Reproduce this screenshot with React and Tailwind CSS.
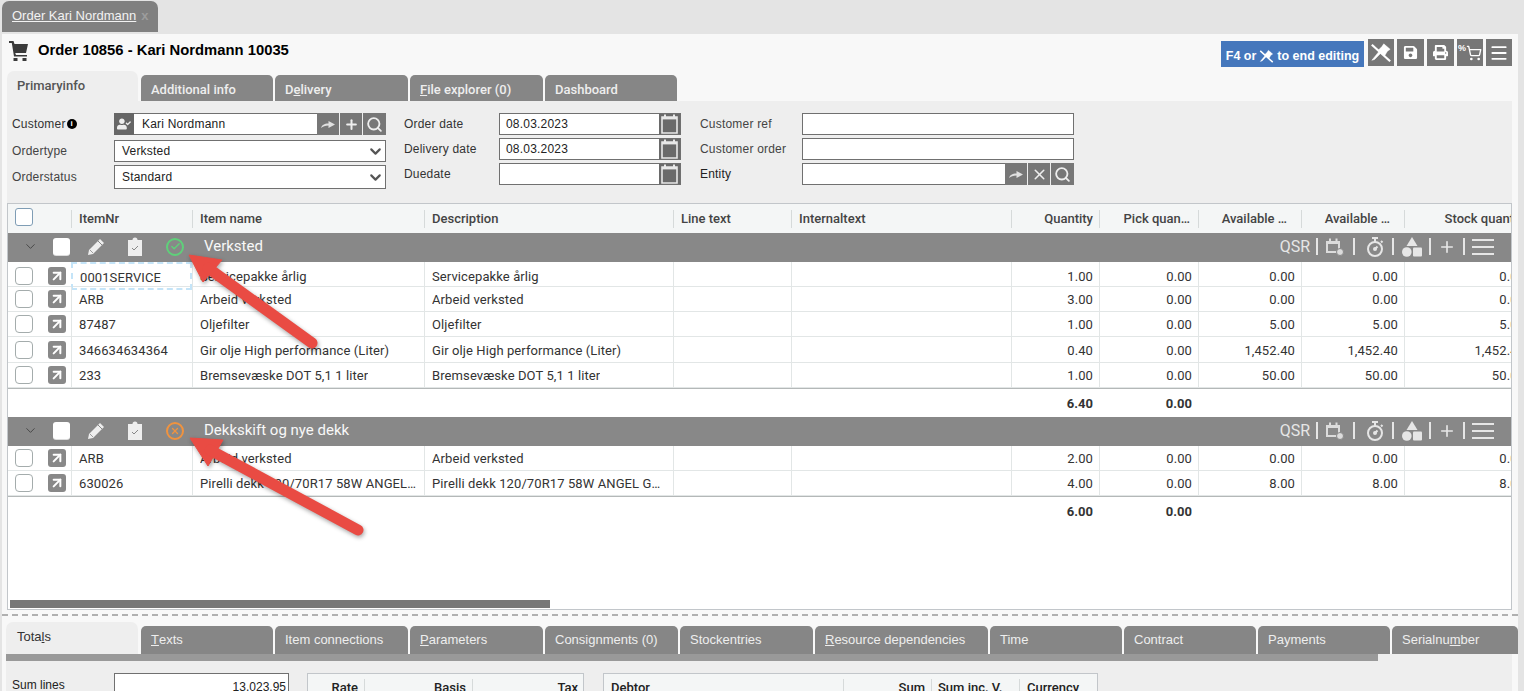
import React from "react";
import { Check, ChevronDown, Plus, Search, X, ArrowUpRight, Menu, ShoppingCart } from "lucide-react";
import { FaSave, FaPrint, FaUserCheck } from "react-icons/fa";

const tableCols =
  "grid grid-cols-[63px_121px_232px_249px_118px_220px_88px_99px_103px_103px_127px] w-[1523px]";

const topTabs = [
  { label: "Additional info", w: "w-[132px]" },
  { label: "Delivery", under: 1, w: "w-[133px]" },
  { label: "File explorer (0)", under: 0, w: "w-[133px]" },
  { label: "Dashboard", w: "w-[132px]" },
];

const bottomTabs = [
  { label: "Texts", under: 0, w: "w-[132px]" },
  { label: "Item connections", w: "w-[133px]" },
  { label: "Parameters", under: 0, w: "w-[133px]" },
  { label: "Consignments (0)", w: "w-[133px]" },
  { label: "Stockentries", w: "w-[133px]" },
  { label: "Resource dependencies", under: 0, w: "w-[173px]" },
  { label: "Time", w: "w-[132px]" },
  { label: "Contract", w: "w-[132px]" },
  { label: "Payments", w: "w-[132px]" },
  { label: "Serialnumber", under: 8, w: "w-[126px]" },
];

const groups = [
  {
    title: "Verksted",
    status: "ok",
    rows: [
      { nr: "0001SERVICE", name: "Servicepakke årlig", qty: "1.00", avail: "0.00", h: "h-[25px]", selected: true },
      { nr: "ARB", name: "Arbeid verksted", qty: "3.00", avail: "0.00", h: "h-[25px]" },
      { nr: "87487", name: "Oljefilter", qty: "1.00", avail: "5.00", h: "h-[25px]" },
      { nr: "346634634364", name: "Gir olje High performance (Liter)", qty: "0.40", avail: "1,452.40", h: "h-[26px]" },
      { nr: "233", name: "Bremsevæske DOT 5,1 1 liter", qty: "1.00", avail: "50.00", h: "h-[25px]" },
    ],
    total: "6.40",
  },
  {
    title: "Dekkskift og nye dekk",
    status: "bad",
    rows: [
      { nr: "ARB", name: "Arbeid verksted", qty: "2.00", avail: "0.00", h: "h-[25px]" },
      {
        nr: "630026",
        name: "Pirelli dekk 120/70R17 58W ANGEL GT 180/55",
        qty: "4.00",
        avail: "8.00",
        h: "h-[25px]",
      },
    ],
    total: "6.00",
  },
];

const Underlined = ({ label, under }) => {
  if (under === undefined) return label;
  return (
    <>
      {label.slice(0, under)}
      <span className="underline">{label[under]}</span>
      {label.slice(under + 1)}
    </>
  );
};

const CartIcon = () => (
  <svg width="19" height="20" viewBox="0 0 19 20" className="mb-[4px] fill-[#3a3a3a]">
    <path d="M0 0h4.5l1 3H19l-2 9H6.2L7 14h11v1.6H5L2.8 2H0z" />
    <rect x="4.5" y="17" width="4" height="3" />
    <rect x="13.5" y="17" width="4" height="3" />
  </svg>
);

const ForwardIcon = () => (
  <svg width="14" height="9" viewBox="0 0 14 9" className="fill-[#e0e0e0]">
    <path d="M0 8c1-3 3-4.5 7.5-4.5V1L14 4.5 7.5 8V5.6C4 5.6 2 6.5 0 8z" />
  </svg>
);

const CalendarIcon = () => (
  <div className="flex h-full w-[21px] shrink-0 items-center justify-center bg-[#6a6a6a]">
    <svg width="17" height="20" viewBox="0 0 17 20">
      <path d="M1 3h15v16H1z" fill="none" stroke="#e8e8e8" strokeWidth="1.6" />
      <path d="M1 3h15v2.4H1z" fill="#e8e8e8" />
      <rect x="3" y="0.5" width="2" height="3.5" fill="#e8e8e8" />
      <rect x="12" y="0.5" width="2" height="3.5" fill="#e8e8e8" />
    </svg>
  </div>
);

const PinOff = ({ size = 22 }) => (
  <svg width={size} height={size} viewBox="0 0 24 24" className="fill-white stroke-white">
    <path d="M15 2l7 6-3 2-3 5-7-6 4-4z" strokeWidth="0.5" />
    <path d="M10 10L2 20l3-1 7-7" strokeWidth="0.5" />
    <path d="M2 3l20 18" strokeWidth="2.4" fill="none" />
  </svg>
);

const PencilIcon = () => (
  <svg width="18" height="18" viewBox="0 0 18 18" className="ml-[17px]">
    <path d="M13 1l4 4L6 16l-5 1 1-5z" fill="#eeeeee" />
    <path d="M11 3l4 4" stroke="#888" strokeWidth="1" />
    <path d="M3 12l3 3" stroke="#888" strokeWidth="0.8" />
  </svg>
);

const ShapesIcon = () => (
  <svg width="20" height="20" viewBox="0 0 20 20" className="fill-[#e6e6e6]">
    <path d="M10 0l5.5 9h-11z" />
    <circle cx="4.8" cy="15" r="4.8" />
    <rect x="11" y="10.5" width="9" height="9" rx="1" />
  </svg>
);

const TimerIcon = () => (
  <svg width="18" height="20" viewBox="0 0 18 20" fill="none" stroke="#e6e6e6" strokeWidth="2">
    <circle cx="9" cy="12" r="7" />
    <path d="M6 1h6M9 1v4M15 4l1.5 1.5" />
    <path d="M9 12l2.5-2.5" />
    <circle cx="9" cy="12" r="1" />
  </svg>
);

const DateClockIcon = () => (
  <svg width="18" height="18" viewBox="0 0 18 18">
    <path d="M0 3h14v12H0z" fill="#dcdcdc" />
    <path d="M2 6h10v7H2z" fill="#8a8a8a" />
    <path d="M3 0.5h2v3H3zM9.5 0.5h2v3h-2z" fill="#dcdcdc" />
    <circle cx="14" cy="14" r="3.5" fill="#dcdcdc" stroke="#888" />
  </svg>
);

const ClipboardIcon = () => (
  <svg width="16" height="19" viewBox="0 0 16 19">
    <path d="M1 3h4.5a2.5 2.5 0 015 0H15v16H1z" fill="#eeeeee" />
    <path d="M5 11l2 2 4-4" fill="none" stroke="#888" strokeWidth="1" />
  </svg>
);

const LookupBtns = ({ middle }) => (
  <div className="flex h-full w-[69px] shrink-0 items-center bg-[#777]">
    <div className="flex h-full w-[22px] items-center justify-center">
      <ForwardIcon />
    </div>
    <div className="flex h-full w-[24px] items-center justify-center border-x border-[#eee]">
      {middle === "x" ? (
        <X size={17} strokeWidth={2.2} className="text-[#eee]" />
      ) : (
        <Plus size={15} strokeWidth={3.2} className="text-[#eee]" />
      )}
    </div>
    <div className="flex h-full flex-1 items-center justify-center">
      <Search size={17} strokeWidth={2.6} className="text-[#eee]" />
    </div>
  </div>
);

const Field = ({ label, labelW, h = "h-[22px]", mt, value, children, labelClass = "text-[#444]" }) => (
  <div className={`flex items-center ${mt || ""}`}>
    <div className={`${labelW} shrink-0 text-xs tracking-[0.2px] ${labelClass}`}>{label}</div>
    <div className={`flex ${h} flex-1 items-center border border-[#707070] bg-white pl-[7px] text-xs text-[#222]`}>
      {value}
      {children}
    </div>
  </div>
);

const SelectField = ({ label, value, h, mt }) => (
  <Field label={label} labelW="w-[102px]" h={h} mt={mt}>
    <span className="flex-1 tracking-[0.2px]">{value}</span>
    <ChevronDown size={17} strokeWidth={3} className="mr-[1px] text-[#555]" />
  </Field>
);

const DateField = ({ label, value, mt }) => (
  <div className={`flex h-[22px] items-center ${mt || ""}`}>
    <div className="w-[95px] shrink-0 text-xs tracking-[0.2px] text-[#333]">{label}</div>
    <div className="flex h-full flex-1 items-center border border-[#707070] bg-white pl-[6px] text-xs tracking-[0.2px] text-[#222]">
      <span className="flex-1">{value}</span>
      <CalendarIcon />
    </div>
  </div>
);

const ToolBtn = ({ children, w = "w-[27px]" }) => (
  <div className={`flex h-[27px] ${w} items-center justify-center bg-[#777] text-white`}>{children}</div>
);

const GroupRow = ({ title, status }) => (
  <div className="flex h-[29px] shrink-0 items-center bg-[#888] pb-[2px]">
    <ChevronDown size={15} strokeWidth={1.5} className="ml-[15px] text-[#444]" />
    <div className="ml-[15px] h-[17px] w-[17px] rounded-[3px] bg-white shadow-[0_1px_0_#ddd]" />
    <PencilIcon />
    <div className="ml-[22px] flex">
      <ClipboardIcon />
    </div>
    {status === "ok" ? (
      <div className="ml-[23px] flex h-[18px] w-[18px] items-center justify-center rounded-full border-2 border-[#5fd07a]">
        <Check size={11} strokeWidth={3} className="text-[#5fd07a]" />
      </div>
    ) : (
      <div className="ml-[23px] flex h-[18px] w-[18px] items-center justify-center rounded-full border-2 border-[#f0933f]">
        <X size={10} strokeWidth={3} className="text-[#f0933f]" />
      </div>
    )}
    <span className="ml-[20px] font-['Roboto',sans-serif] text-[15px] text-[#f8f8f8]">{title}</span>
    <div className="ml-auto flex items-center pr-[17px] text-[#e6e6e6]">
      <span className="font-['Roboto',sans-serif] text-base">QSR</span>
      <div className="ml-[6px] mr-[8px] h-[17px] w-[2px] bg-[#e6e6e6]" />
      <DateClockIcon />
      <div className="ml-[9px] mr-[11px] h-[17px] w-[2px] bg-[#e6e6e6]" />
      <TimerIcon />
      <div className="ml-[8px] mr-[8px] h-[17px] w-[2px] bg-[#e6e6e6]" />
      <ShapesIcon />
      <div className="mx-[7px] h-[17px] w-[2px] bg-[#e6e6e6]" />
      <Plus size={18} strokeWidth={2.2} />
      <div className="mx-[7px] h-[17px] w-[2px] bg-[#e6e6e6]" />
      <div className="flex h-[16px] w-[22px] flex-col justify-between">
        <div className="h-[2px] bg-[#e6e6e6]" />
        <div className="h-[2px] bg-[#e6e6e6]" />
        <div className="h-[2px] bg-[#e6e6e6]" />
      </div>
    </div>
  </div>
);

const ItemRow = ({ row }) => {
  const cell = "flex items-center border-l border-[#e2e6e6] pl-[7px] pt-[2px] whitespace-nowrap overflow-hidden";
  const num = "flex items-center justify-end border-l border-[#e2e6e6] pr-[6px] pt-[2px] whitespace-nowrap overflow-hidden";
  return (
    <div className={`${tableCols} ${row.h} shrink-0 border-b border-[#e2e6e6] font-['Roboto',sans-serif] text-[13px] tracking-[0.1px] text-[#333]`}>
      <div className="flex items-center">
        <div className="ml-[7px] h-[18px] w-[18px] rounded-[4px] border border-[#a4acac] bg-white" />
        <div className="ml-[15px] flex h-[18px] w-[18px] items-center justify-center rounded-[3px] bg-[#888]">
          <ArrowUpRight size={16} strokeWidth={3} className="text-white" />
        </div>
      </div>
      {row.selected ? (
        <div className="flex items-center border-2 border-dashed border-[#c4e4f8] pl-[7px] pt-[4px]">{row.nr}</div>
      ) : (
        <div className={`${cell} pr-[7px]`}>{row.nr}</div>
      )}
      <div className={`${cell} pr-[7px]`}>
        <span className="truncate">{row.name}</span>
      </div>
      <div className={`${cell} pr-[9px]`}>
        <span className="truncate">{row.name}</span>
      </div>
      <div className={cell} />
      <div className={cell} />
      <div className={num}>{row.qty}</div>
      <div className={num}>0.00</div>
      <div className={num}>{row.avail}</div>
      <div className={num}>{row.avail}</div>
      <div className={num}>{row.avail}</div>
    </div>
  );
};

const TotalRow = ({ total }) => (
  <div className={`${tableCols} h-[28px] shrink-0 items-center pt-[2px] font-['Roboto',sans-serif] text-[13px] font-bold text-[#333]`}>
    <div className="col-start-7 pr-[6px] text-right">{total}</div>
    <div className="pr-[6px] text-right">0.00</div>
  </div>
);

const HeadCell = ({ children, align = "" }) => (
  <div className={`flex h-[18px] items-center overflow-hidden whitespace-nowrap border-l border-[#d6dada] pl-[7px] ${align}`}>
    {children}
  </div>
);

const PanelHead = ({ children, w, right }) => (
  <div className={`flex h-[18px] ${w} shrink-0 items-center border-r border-[#d6dada] pr-[6px] ${right ? "justify-end" : ""}`}>
    {children}
  </div>
);

const App = () => {
  return (
    <div className="relative h-[691px] w-[1524px] overflow-hidden bg-[#e4e4e4] font-['Liberation_Sans',Arial,sans-serif]">
      {/* page tab */}
      <div className="flex h-[34px] items-start pl-[2px] pt-[1px]">
        <div className="flex h-[31px] w-[156px] items-center rounded-t-[7px] bg-[#808080] pb-[2px] pl-[10px] text-[13px] text-[#f2f2f2]">
          <span className="underline">Order Kari Nordmann</span>
          <span className="ml-[5px] font-bold text-[#9c9c9c]">x</span>
        </div>
      </div>

      <div className="ml-[2px] flex h-[657px] w-[1516px] flex-col bg-[#f8f8f8]">
        {/* title + buttons */}
        <div className="flex h-[37px] shrink-0 items-center pl-[7px] pr-[6px]">
          <CartIcon />
          <span className="mb-[4px] ml-[10px] text-[14.8px] font-bold text-black">Order 10856 - Kari Nordmann 10035</span>
          <div className="ml-auto flex items-center gap-[3px]">
            <div className="mr-[1px] mt-[2px] flex h-[26px] w-[143px] items-center justify-center gap-[3px] bg-[#4577bc] pt-[6px] text-[12.5px] font-bold text-white">
              F4 or <PinOff size={15} /> to end editing
            </div>
            <ToolBtn w="w-[26px]">
              <PinOff />
            </ToolBtn>
            <ToolBtn>
              <FaSave size={15} />
            </ToolBtn>
            <ToolBtn>
              <FaPrint size={15} />
            </ToolBtn>
            <ToolBtn w="w-[26px]">
              <span className="mb-[8px] text-[9px] font-bold">%</span>
              <ShoppingCart size={16} strokeWidth={2} />
            </ToolBtn>
            <ToolBtn w="w-[26px]">
              <Menu size={20} strokeWidth={2.2} />
            </ToolBtn>
          </div>
        </div>

        {/* top tabs */}
        <div className="flex h-[30px] shrink-0 items-end pl-[5px] font-['Roboto',sans-serif] text-[13px] font-medium">
          <div className="mr-[3px] flex h-[30px] w-[131px] rounded-t-[7px] bg-[#eeeeee] pl-[10px] pt-[5px] text-[#555]">
            Primaryinfo
          </div>
          {topTabs.map((tab) => (
            <div
              key={tab.label}
              className={`mr-[2px] flex h-[26px] ${tab.w} items-center rounded-t-[5px] bg-[#868686] pl-[10px] pt-[3px] text-[#eeeeee]`}
            >
              <Underlined label={tab.label} under={tab.under} />
            </div>
          ))}
        </div>

        {/* form */}
        <div className="ml-[5px] mr-[6px] flex h-[102px] shrink-0 bg-[#eeeeee] pl-[5px] pt-[12px]">
          <div className="w-[374px]">
            <div className="flex h-[22px] items-center">
              <div className="flex w-[102px] shrink-0 items-center text-xs tracking-[0.2px] text-[#333]">
                Customer
                <span className="ml-[1px] flex h-[10px] w-[10px] items-center justify-center rounded-full bg-black text-[8px] font-bold text-white">
                  i
                </span>
              </div>
              <div className="flex h-full flex-1">
                <div className="flex h-full w-[20px] shrink-0 items-center justify-center bg-[#666]">
                  <FaUserCheck size={14} className="text-[#eee]" />
                </div>
                <div className="flex h-full flex-1 items-center border-y border-[#707070] bg-white pl-[8px] text-xs tracking-[0.2px] text-[#222]">
                  Kari Nordmann
                </div>
                <LookupBtns />
              </div>
            </div>
            <SelectField label="Ordertype" value="Verksted" mt="mt-[5px]" />
            <SelectField label="Orderstatus" value="Standard" mt="mt-[3px]" h="h-[24px]" />
          </div>
          <div className="ml-[18px] w-[277px]">
            <DateField label="Order date" value="08.03.2023" />
            <DateField label="Delivery date" value="08.03.2023" mt="mt-[3px]" />
            <DateField label="Duedate" value="" mt="mt-[3px]" />
          </div>
          <div className="ml-[19px] w-[374px]">
            <Field label="Customer ref" labelW="w-[102px]" />
            <Field label="Customer order" labelW="w-[102px]" mt="mt-[3px]" />
            <div className="mt-[3px] flex h-[22px] items-center">
              <div className="w-[102px] shrink-0 text-xs tracking-[0.2px] text-[#222]">Entity</div>
              <div className="flex h-full flex-1">
                <div className="flex-1 border border-r-0 border-[#707070] bg-white" />
                <LookupBtns middle="x" />
              </div>
            </div>
          </div>
        </div>

        {/* lines table */}
        <div className="ml-[5px] mr-[6px] flex h-[407px] shrink-0 flex-col overflow-hidden border border-[#c2c6ca] bg-white">
          <div className={`${tableCols} h-[29px] shrink-0 items-center bg-[#f4f6f6] font-['Roboto',sans-serif] text-[13px] font-medium text-[#444]`}>
            <div className="mb-[3px] pl-[7px]">
              <div className="h-[18px] w-[18px] rounded-[3px] border border-[#7f9db5] bg-white" />
            </div>
            <HeadCell>ItemNr</HeadCell>
            <HeadCell>Item name</HeadCell>
            <HeadCell>Description</HeadCell>
            <HeadCell>Line text</HeadCell>
            <HeadCell>Internaltext</HeadCell>
            <HeadCell align="justify-end pr-[6px]">Quantity</HeadCell>
            <HeadCell align="justify-end pr-[8px]">Pick quan…</HeadCell>
            <HeadCell align="justify-end pr-[14px]">Available …</HeadCell>
            <HeadCell align="justify-end pr-[14px]">Available …</HeadCell>
            <HeadCell align="justify-end pr-[3px]">Stock quantity</HeadCell>
          </div>
          {groups.map((group) => (
            <React.Fragment key={group.title}>
              <GroupRow title={group.title} status={group.status} />
              {group.rows.map((row) => (
                <ItemRow key={row.nr + row.qty} row={row} />
              ))}
              <div className="h-px shrink-0 bg-[#b4b8b8]" />
              <TotalRow total={group.total} />
            </React.Fragment>
          ))}
          <div className="flex-1" />
          <div className="ml-[2px] mb-[1px] h-[8px] w-[540px] shrink-0 bg-[#777]" />
        </div>

        {/* splitter */}
        <div className="mt-[4px] shrink-0 border-t-2 border-dashed border-[#b0b0b0]" />

        {/* bottom tabs */}
        <div className="mt-[6px] flex h-[32px] shrink-0 items-end pl-[4px] text-[13px]">
          <div className="mr-[3px] flex h-[32px] w-[132px] shrink-0 rounded-t-[7px] bg-[#eeeeee] pl-[11px] pt-[5px] text-[#333]">
            <Underlined label="Totals" under={4} />
          </div>
          {bottomTabs.map((tab) => (
            <div
              key={tab.label}
              className={`mr-[2px] flex h-[28px] ${tab.w} shrink-0 items-center rounded-t-[5px] bg-[#868686] pl-[10px] text-[#eeeeee]`}
            >
              <Underlined label={tab.label} under={tab.under} />
            </div>
          ))}
        </div>

        <div className="ml-[4px] mr-[6px] flex-1 overflow-hidden bg-[#eeeeee]">
          <div className="h-[7px] w-[1372px] bg-[#999]" />
          <div className="flex pl-[6px] pt-[12px] text-xs text-[#222]">
            <div className="w-[102px] pt-[4px]">Sum lines</div>
            <div className="h-[30px] w-[175px] border border-[#707070] bg-white pr-[2px] pt-[5px] text-right">13,023.95</div>
            <div className="ml-[18px] flex h-[40px] w-[277px] border border-[#c2c6ca] bg-[#f4f6f6] pt-[5px] font-['Roboto',sans-serif] text-[13px] font-medium">
              <PanelHead w="w-[57px]" right>
                Rate
              </PanelHead>
              <PanelHead w="w-[108px]" right>
                Basis
              </PanelHead>
              <div className="flex-1 pr-[5px] text-right">Tax</div>
            </div>
            <div className="ml-[19px] flex h-[40px] w-[495px] border border-[#c2c6ca] bg-[#f4f6f6] pl-[7px] pt-[5px] font-['Roboto',sans-serif] text-[13px] font-medium">
              <PanelHead w="w-[233px]">Debtor</PanelHead>
              <PanelHead w="w-[88px]" right>
                Sum
              </PanelHead>
              <PanelHead w="w-[88px]">
                <span className="pl-[6px]">Sum inc. V.</span>
              </PanelHead>
              <div className="pl-[7px]">Currency</div>
            </div>
          </div>
        </div>
      </div>

      {/* red annotation arrows */}
      <svg
        className="pointer-events-none absolute left-0 top-0 drop-shadow-[1px_2px_2px_rgba(0,0,0,0.35)]"
        width="1524"
        height="691"
        fill="#e94b43"
        stroke="#e94b43"
      >
        <path d="M189 255L222 260L203 282z" strokeWidth="1" />
        <path d="M208 268L312 343" strokeWidth="11" strokeLinecap="round" />
        <path d="M190 438L223 440L208 466z" strokeWidth="1" />
        <path d="M210 450L358 530" strokeWidth="11" strokeLinecap="round" />
      </svg>
    </div>
  );
};

export default App;
